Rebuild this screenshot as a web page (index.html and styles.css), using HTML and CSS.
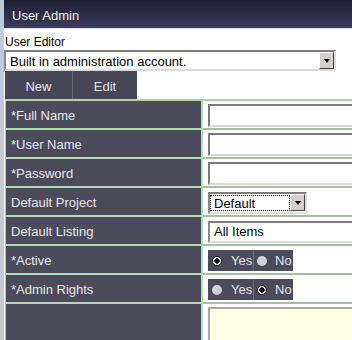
FILE: index.html
```html
<!DOCTYPE html>
<html lang="en">
<head>
  <meta charset="UTF-8">
  <title>User Admin</title>
  <link rel="stylesheet" href="styles.css">
</head>
<body>
  <div class="frame">
    <div class="titlebar">User Admin</div>

    <div class="editor-label">User Editor</div>
    <div class="dropdown wide">
      <span class="dropdown-text">Built in administration account.</span>
      <span class="dropdown-btn"><span class="caret"></span></span>
    </div>

    <div class="tabs">
      <div class="tab tab-new">New</div>
      <div class="tab tab-edit">Edit</div>
    </div>

    <table class="form">
      <tr>
        <td class="label">*Full Name</td>
        <td class="value"><input type="text" class="field"></td>
      </tr>
      <tr>
        <td class="label">*User Name</td>
        <td class="value"><input type="text" class="field"></td>
      </tr>
      <tr>
        <td class="label">*Password</td>
        <td class="value"><input type="password" class="field"></td>
      </tr>
      <tr>
        <td class="label">Default Project</td>
        <td class="value">
          <div class="dropdown small">
            <span class="dropdown-text focus">Default</span>
            <span class="dropdown-btn"><span class="caret"></span></span>
          </div>
        </td>
      </tr>
      <tr>
        <td class="label">Default Listing</td>
        <td class="value">
          <div class="dropdown listing">
            <span class="dropdown-text">All Items</span>
          </div>
        </td>
      </tr>
      <tr>
        <td class="label">*Active</td>
        <td class="value">
          <div class="radios">
            <span class="opt opt-yes"><span class="radio on"></span>Yes</span>
            <span class="opt opt-no"><span class="radio"></span>No</span>
          </div>
        </td>
      </tr>
      <tr>
        <td class="label">*Admin Rights</td>
        <td class="value">
          <div class="radios">
            <span class="opt opt-yes"><span class="radio"></span>Yes</span>
            <span class="opt opt-no"><span class="radio on"></span>No</span>
          </div>
        </td>
      </tr>
      <tr>
        <td class="label last"></td>
        <td class="value last"><textarea class="notes"></textarea></td>
      </tr>
    </table>
  </div>
</body>
</html>
```

FILE: styles.css
```css
html, body {
  margin: 0;
  overflow: hidden;
}
body {
  font-family: "Liberation Sans", Arial, sans-serif;
  font-size: 13px;
  background-color: #fff;
  color: #000;
}
.frame {
  border-left: 4px solid #c3c9dd;
  min-height: 340px;
  max-height: 340px;
  overflow: hidden;
}
.titlebar {
  height: 28px;
  line-height: 31px;
  padding-left: 8px;
  color: #f2f2f8;
  background: linear-gradient(#1f1f34, #3b3b5d);
  border-bottom: 1px solid #dcdcec;
}
.editor-label {
  font-size: 12px;
  height: 16px;
  line-height: 17px;
  padding: 5px 0 0 1px;
}
.dropdown {
  display: flex;
  align-items: center;
  box-sizing: border-box;
  border: 2px solid;
  border-color: #7c7c7c #dcdcdc #dcdcdc #8a8a8a;
  background-color: #fff;
}
.dropdown.wide {
  width: 332px;
  height: 21px;
  padding-top: 1px;
}
.dropdown.small {
  width: 99px;
  height: 22px;
  padding: 1px 0 1px 0;
}
.dropdown.listing {
  width: 170px;
  height: 22px;
}
.dropdown-text {
  flex: 1;
  padding-left: 4px;
  white-space: nowrap;
  overflow: hidden;
}
.dropdown-text.focus {
  align-self: stretch;
  line-height: 16px;
  border: 1px dotted #000;
  padding-left: 3px;
}
.dropdown-btn {
  display: flex;
  align-items: center;
  justify-content: center;
  box-sizing: border-box;
  width: 15px;
  height: 17px;
  background-color: #d4d0c8;
  border: 1px solid;
  border-color: #fff #404040 #404040 #fff;
}
.wide .dropdown-btn {
  margin-top: -1px;
}
.caret {
  width: 0;
  height: 0;
  border-left: 3.5px solid transparent;
  border-right: 3.5px solid transparent;
  border-top: 4px solid #000;
}
.tabs {
  display: flex;
  margin-left: 1px;
  height: 28px;
}
.tab {
  background-color: #464657;
  color: #e4e4ea;
  text-align: center;
  line-height: 31px;
}
.tab-new {
  width: 67px;
}
.tab-edit {
  width: 64px;
  border-left: 1px solid #6a6a7e;
}
.form {
  table-layout: fixed;
  width: 400px;
  margin-left: 1px;
  border-collapse: separate;
  border-spacing: 0;
  border-top: 2px solid #a9d3a1;
  border-left: 1px solid #a9d3a1;
}
.form td {
  height: 25px;
  padding: 2px 0 0 5px;
  vertical-align: middle;
}
.label {
  width: 190px;
  background-color: #4b4b5b;
  color: #e6e6ec;
  border-right: 2px solid #b4dcac;
  border-bottom: 2px solid #b4dcac;
  white-space: nowrap;
}
.value {
  background-color: #fff;
  border-bottom: 2px solid #a3bf9d;
}
.form td.last {
  height: 60px;
  vertical-align: top;
  border-bottom: none;
}
.field {
  display: block;
  box-sizing: border-box;
  width: 170px;
  height: 23px;
  margin: 0;
  border: 2px solid;
  border-color: #7a7a7a #d8d8d8 #d8d8d8 #7a7a7a;
  background-color: #fff;
  outline: none;
}
.radios {
  display: inline-flex;
  height: 21px;
  background-color: #4b4b5b;
  color: #e4e4ea;
  vertical-align: middle;
}
.opt {
  display: flex;
  align-items: center;
}
.opt-yes {
  width: 45px;
  border-right: 1px solid #6c6c80;
}
.opt-no {
  width: 39px;
}
.radio {
  box-sizing: border-box;
  width: 10px;
  height: 10px;
  border-radius: 50%;
  background-color: #d0d0d4;
  margin: 0 9px 0 4px;
}
.opt-no .radio {
  margin: 0 8px 0 3px;
}
.radio.on {
  background: radial-gradient(circle, #000 0 2.4px, #fff 3px);
  border: 1px solid #1a1a1a;
}
.notes {
  display: block;
  box-sizing: border-box;
  width: 170px;
  height: 60px;
  margin: 1px 0 0 0;
  border: 2px solid;
  border-color: #a8a8a0 #e8e8d8 #e8e8d8 #a8a8a0;
  background-color: #fffde6;
  resize: none;
}
```
